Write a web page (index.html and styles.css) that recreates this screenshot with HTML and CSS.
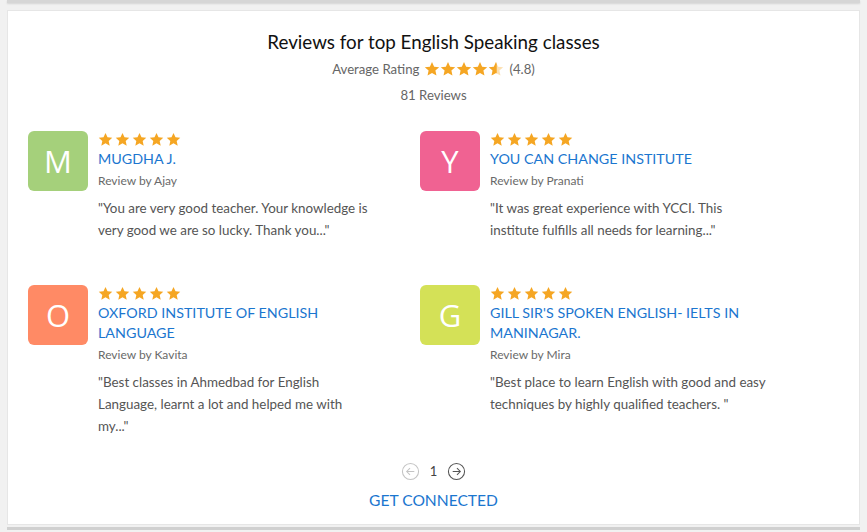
FILE: index.html
```html
<!DOCTYPE html>
<html>
<head>
<meta charset="utf-8">
<link rel="stylesheet" href="styles.css">
</head>
<body>
<div class="prev-strip"></div>
<section class="card">
  <h2 class="title">Reviews for top English Speaking classes</h2>
  <div class="avg">
    <span>Average Rating</span>
    <span class="stars big">
      <svg viewBox="0 0 24 24"><path d="M12 1.5l3.2 7 7.6.8-5.7 5.1 1.6 7.5L12 18l-6.7 3.9 1.6-7.5L1.2 9.3l7.6-.8z"/></svg>
      <svg viewBox="0 0 24 24"><path d="M12 1.5l3.2 7 7.6.8-5.7 5.1 1.6 7.5L12 18l-6.7 3.9 1.6-7.5L1.2 9.3l7.6-.8z"/></svg>
      <svg viewBox="0 0 24 24"><path d="M12 1.5l3.2 7 7.6.8-5.7 5.1 1.6 7.5L12 18l-6.7 3.9 1.6-7.5L1.2 9.3l7.6-.8z"/></svg>
      <svg viewBox="0 0 24 24"><path d="M12 1.5l3.2 7 7.6.8-5.7 5.1 1.6 7.5L12 18l-6.7 3.9 1.6-7.5L1.2 9.3l7.6-.8z"/></svg>
      <svg viewBox="0 0 24 24"><path d="M12 1.5l3.2 7 7.6.8-5.7 5.1 1.6 7.5L12 18l-6.7 3.9 1.6-7.5L1.2 9.3l7.6-.8z" class="empty"/><path d="M12 1.5l3.2 7 7.6.8-5.7 5.1 1.6 7.5L12 18l-6.7 3.9 1.6-7.5L1.2 9.3l7.6-.8z" class="half"/></svg>
    </span>
    <span>(4.8)</span>
  </div>
  <div class="count">81 Reviews</div>

  <div class="grid">
    <div class="review">
      <div class="avatar green">M</div>
      <div class="body">
        <div class="stars"><svg viewBox="0 0 24 24"><path d="M12 1.5l3.2 7 7.6.8-5.7 5.1 1.6 7.5L12 18l-6.7 3.9 1.6-7.5L1.2 9.3l7.6-.8z"/></svg><svg viewBox="0 0 24 24"><path d="M12 1.5l3.2 7 7.6.8-5.7 5.1 1.6 7.5L12 18l-6.7 3.9 1.6-7.5L1.2 9.3l7.6-.8z"/></svg><svg viewBox="0 0 24 24"><path d="M12 1.5l3.2 7 7.6.8-5.7 5.1 1.6 7.5L12 18l-6.7 3.9 1.6-7.5L1.2 9.3l7.6-.8z"/></svg><svg viewBox="0 0 24 24"><path d="M12 1.5l3.2 7 7.6.8-5.7 5.1 1.6 7.5L12 18l-6.7 3.9 1.6-7.5L1.2 9.3l7.6-.8z"/></svg><svg viewBox="0 0 24 24"><path d="M12 1.5l3.2 7 7.6.8-5.7 5.1 1.6 7.5L12 18l-6.7 3.9 1.6-7.5L1.2 9.3l7.6-.8z"/></svg></div>
        <a class="name">MUGDHA J.</a>
        <div class="by">Review by Ajay</div>
        <p class="quote">"You are very good teacher. Your knowledge is very good we are so lucky. Thank you..."</p>
      </div>
    </div>
    <div class="review">
      <div class="avatar pink">Y</div>
      <div class="body">
        <div class="stars"><svg viewBox="0 0 24 24"><path d="M12 1.5l3.2 7 7.6.8-5.7 5.1 1.6 7.5L12 18l-6.7 3.9 1.6-7.5L1.2 9.3l7.6-.8z"/></svg><svg viewBox="0 0 24 24"><path d="M12 1.5l3.2 7 7.6.8-5.7 5.1 1.6 7.5L12 18l-6.7 3.9 1.6-7.5L1.2 9.3l7.6-.8z"/></svg><svg viewBox="0 0 24 24"><path d="M12 1.5l3.2 7 7.6.8-5.7 5.1 1.6 7.5L12 18l-6.7 3.9 1.6-7.5L1.2 9.3l7.6-.8z"/></svg><svg viewBox="0 0 24 24"><path d="M12 1.5l3.2 7 7.6.8-5.7 5.1 1.6 7.5L12 18l-6.7 3.9 1.6-7.5L1.2 9.3l7.6-.8z"/></svg><svg viewBox="0 0 24 24"><path d="M12 1.5l3.2 7 7.6.8-5.7 5.1 1.6 7.5L12 18l-6.7 3.9 1.6-7.5L1.2 9.3l7.6-.8z"/></svg></div>
        <a class="name">YOU CAN CHANGE INSTITUTE</a>
        <div class="by">Review by Pranati</div>
        <p class="quote">"It was great experience with YCCI. This institute fulfills all needs for learning..."</p>
      </div>
    </div>
    <div class="review">
      <div class="avatar orange">O</div>
      <div class="body">
        <div class="stars"><svg viewBox="0 0 24 24"><path d="M12 1.5l3.2 7 7.6.8-5.7 5.1 1.6 7.5L12 18l-6.7 3.9 1.6-7.5L1.2 9.3l7.6-.8z"/></svg><svg viewBox="0 0 24 24"><path d="M12 1.5l3.2 7 7.6.8-5.7 5.1 1.6 7.5L12 18l-6.7 3.9 1.6-7.5L1.2 9.3l7.6-.8z"/></svg><svg viewBox="0 0 24 24"><path d="M12 1.5l3.2 7 7.6.8-5.7 5.1 1.6 7.5L12 18l-6.7 3.9 1.6-7.5L1.2 9.3l7.6-.8z"/></svg><svg viewBox="0 0 24 24"><path d="M12 1.5l3.2 7 7.6.8-5.7 5.1 1.6 7.5L12 18l-6.7 3.9 1.6-7.5L1.2 9.3l7.6-.8z"/></svg><svg viewBox="0 0 24 24"><path d="M12 1.5l3.2 7 7.6.8-5.7 5.1 1.6 7.5L12 18l-6.7 3.9 1.6-7.5L1.2 9.3l7.6-.8z"/></svg></div>
        <a class="name">OXFORD INSTITUTE OF ENGLISH LANGUAGE</a>
        <div class="by">Review by Kavita</div>
        <p class="quote">"Best classes in Ahmedbad for English Language, learnt a lot and helped me with my..."</p>
      </div>
    </div>
    <div class="review">
      <div class="avatar lime">G</div>
      <div class="body">
        <div class="stars"><svg viewBox="0 0 24 24"><path d="M12 1.5l3.2 7 7.6.8-5.7 5.1 1.6 7.5L12 18l-6.7 3.9 1.6-7.5L1.2 9.3l7.6-.8z"/></svg><svg viewBox="0 0 24 24"><path d="M12 1.5l3.2 7 7.6.8-5.7 5.1 1.6 7.5L12 18l-6.7 3.9 1.6-7.5L1.2 9.3l7.6-.8z"/></svg><svg viewBox="0 0 24 24"><path d="M12 1.5l3.2 7 7.6.8-5.7 5.1 1.6 7.5L12 18l-6.7 3.9 1.6-7.5L1.2 9.3l7.6-.8z"/></svg><svg viewBox="0 0 24 24"><path d="M12 1.5l3.2 7 7.6.8-5.7 5.1 1.6 7.5L12 18l-6.7 3.9 1.6-7.5L1.2 9.3l7.6-.8z"/></svg><svg viewBox="0 0 24 24"><path d="M12 1.5l3.2 7 7.6.8-5.7 5.1 1.6 7.5L12 18l-6.7 3.9 1.6-7.5L1.2 9.3l7.6-.8z"/></svg></div>
        <a class="name">GILL SIR'S SPOKEN ENGLISH- IELTS IN MANINAGAR.</a>
        <div class="by">Review by Mira</div>
        <p class="quote">"Best place to learn English with good and easy techniques by highly qualified teachers. "</p>
      </div>
    </div>
  </div>

  <div class="pager">
    <span class="pg-btn disabled"><svg viewBox="0 0 20 20"><circle cx="10" cy="10" r="8.5"/><path d="M14 10H6M9.5 6.5L6 10l3.5 3.5"/></svg></span>
    <span class="pg-num">1</span>
    <span class="pg-btn"><svg viewBox="0 0 20 20"><circle cx="10" cy="10" r="8.5"/><path d="M6 10h8M10.5 6.5L14 10l-3.5 3.5"/></svg></span>
  </div>
  <a class="connect">GET CONNECTED</a>
</section>
<div class="next-strip"></div>
</body>
</html>
```
FILE: styles.css
```css
* { box-sizing: border-box; }
html, body { margin: 0; padding: 0; }
body {
  background: #f1f1f1;
  font-family: Lato, "Open Sans", sans-serif;
  width: 867px;
  height: 532px;
  overflow: hidden;
}
.prev-strip {
  height: 3px;
  background: #d6d6d6;
  margin: 0 7px;
  box-shadow: 0 1px 2px rgba(0,0,0,0.12);
}
.card {
  background: #fff;
  margin: 7px 7px 0 7px;
  width: 853px;
  height: 515px;
  border: 1px solid #e6e6e6;
  padding: 19px 20px 0 20px;
  display: flex;
  flex-direction: column;
  align-items: center;
}
.title {
  margin: 0;
  font-size: 18.8px;
  font-weight: 400;
  color: #111;
  line-height: 24px;
  text-align: center;
}
.avg {
  margin-top: 5px;
  display: flex;
  align-items: center;
  gap: 5px;
  font-size: 13.2px;
  color: #666;
  line-height: 20px;
}
.count {
  margin-top: 6px;
  font-size: 13.2px;
  color: #666;
  line-height: 20px;
}
.stars { display: flex; gap: 2px; }
.stars svg { width: 15px; height: 15px; fill: #f5a623; display: block; }
.stars.big { gap: 0; }
.stars.big svg { width: 16px; height: 16px; }
.stars .empty { fill: #f5a623; opacity: 0.35; }
.stars .half { clip-path: inset(0 45% 0 0); }
.grid {
  align-self: stretch;
  margin-top: 26px;
  display: grid;
  grid-template-columns: 392px 392px;
  row-gap: 44px;
}
.review { display: flex; align-items: flex-start; }
.avatar {
  width: 60px;
  height: 60px;
  border-radius: 6px;
  color: #fff;
  font-size: 31px;
  display: flex;
  align-items: center;
  justify-content: center;
  margin-right: 10px;
  flex: none;
  font-family: "Open Sans", Lato, sans-serif;
}
.green { background: #a5d07b; }
.pink { background: #f06292; }
.orange { background: #ff8a65; }
.lime { background: #d4e157; }
.body { width: 278px; padding-top: 1px; }
.body .stars { height: 14px; align-items: center; }
.name {
  display: block;
  margin-top: 3px;
  font-size: 14.3px;
  line-height: 20px;
  color: #1b76cf;
}
.by {
  margin-top: 2px;
  font-size: 12px;
  line-height: 20px;
  color: #6a6a6a;
}
.quote {
  margin: 6px 0 0 0;
  font-size: 13.4px;
  line-height: 22px;
  color: #555;
}
.pager {
  margin-top: 25px;
  display: flex;
  align-items: center;
  gap: 10px;
  height: 18px;
}
.pg-btn svg {
  width: 19px; height: 19px; display: block;
  fill: none; stroke: #555; stroke-width: 1.1;
}
.pg-btn.disabled svg { stroke: #c4c4c4; }
.pg-num { font-size: 13px; color: #444; }
.connect {
  margin-top: 10px;
  font-size: 15.6px;
  line-height: 20px;
  color: #1b76cf;
}
.next-strip {
  height: 3px;
  margin: 2px 7px 0;
  background: #d0d0d0;
}
```
